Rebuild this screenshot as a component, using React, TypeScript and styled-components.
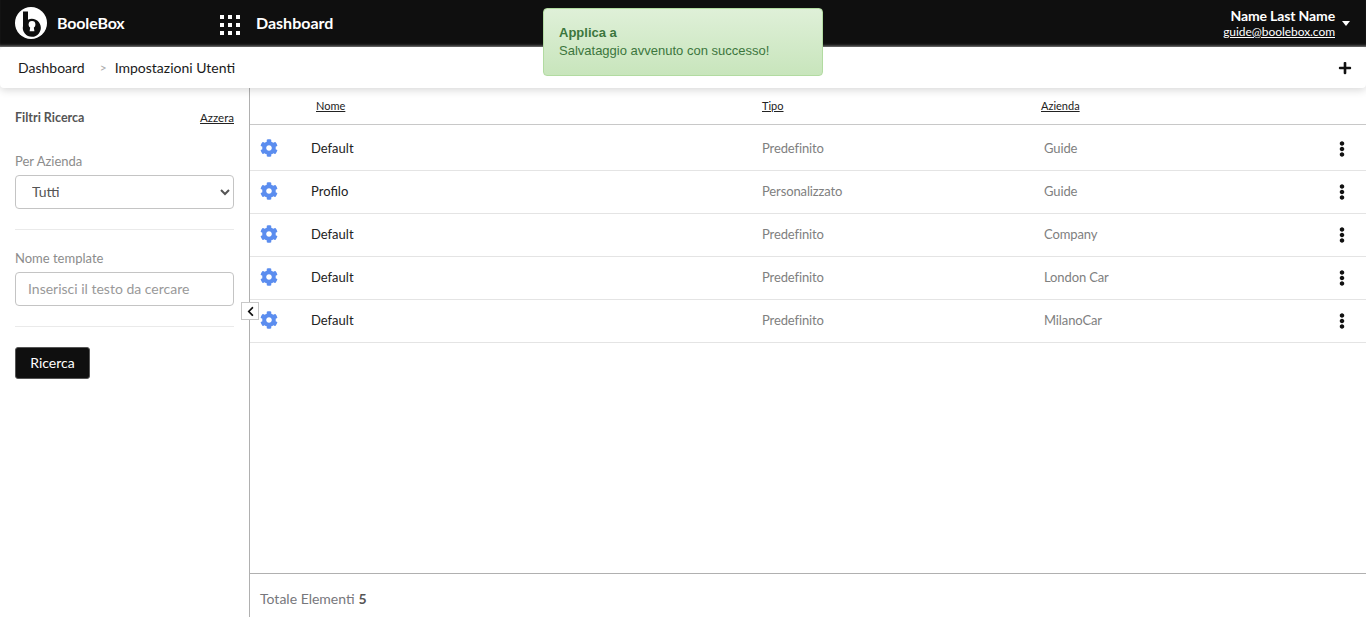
import React from 'react';
import styled, { createGlobalStyle } from 'styled-components';
import { FaCog, FaEllipsisV, FaChevronLeft, FaPlus } from 'react-icons/fa';

const GlobalStyle = createGlobalStyle`
  html, body {
    margin: 0;
    padding: 0;
    height: 100%;
    background: #fff;
    font-family: Lato, "Open Sans", sans-serif;
    overflow: hidden;
  }
  #root {
    height: 100%;
  }
  * {
    box-sizing: border-box;
  }
`;

const Page = styled.div`
  display: flex;
  flex-direction: column;
  height: 617px;
  position: relative;
`;

const Header = styled.header`
  display: flex;
  align-items: center;
  height: 47px;
  flex: none;
  background: #0f0f0f;
  color: #fff;
  padding: 0 15px 1px;
  box-shadow: inset 0 -3px 3px -2px #8a8a8a;
  position: relative;
  z-index: 3;
`;

const Brand = styled.div`
  display: flex;
  align-items: center;
  gap: 10px;
  width: 205px;
  font-size: 16px;
  font-weight: 700;
  letter-spacing: -0.15px;
`;

const BrandName = styled.span`
  margin-top: -1px;
`;

const Apps = styled.div`
  display: grid;
  grid-template-columns: repeat(3, 4px);
  grid-auto-rows: 4px;
  gap: 4px;
  margin-right: 16px;
  margin-top: 3px;
`;

const AppsDot = styled.span`
  background: #fff;
`;

const PageTitle = styled.div`
  font-size: 16px;
  font-weight: 700;
  margin-top: -1px;
`;

const UserBlock = styled.div`
  margin-left: auto;
  display: flex;
  align-items: center;
  gap: 7px;
  padding-right: 1px;
  margin-top: -1px;
`;

const UserText = styled.div`
  display: flex;
  flex-direction: column;
  align-items: flex-end;
`;

const UserName = styled.div`
  font-size: 14px;
  font-weight: 700;
  line-height: 16px;
  letter-spacing: -0.13px;
  margin-bottom: 1px;
`;

const UserMail = styled.a`
  font-size: 12px;
  line-height: 13px;
  letter-spacing: -0.05px;
  color: #fff;
  text-decoration: underline;
`;

const Caret = styled.span`
  width: 0;
  height: 0;
  border-left: 4.5px solid transparent;
  border-right: 4.5px solid transparent;
  border-top: 5px solid #fff;
  margin-top: 2px;
`;

const Crumbs = styled.nav`
  display: flex;
  align-items: center;
  height: 41px;
  flex: none;
  background: #fff;
  padding: 0 14px 0 18px;
  font-size: 14px;
  box-shadow: 0 2px 8px rgba(0, 0, 0, 0.16);
  border-radius: 4px;
  position: relative;
  z-index: 2;
`;

const Crumb = styled.span`
  color: #1a1a1a;
`;

const CrumbSep = styled.span`
  color: #aaa;
  font-size: 12px;
  margin: 0 8px 0 15px;
`;

const AddButton = styled.span`
  margin-left: auto;
  display: flex;
  color: #111;
  font-size: 14px;
`;

const Body = styled.div`
  display: flex;
  flex: 1;
  min-height: 0;
`;

const Sidebar = styled.aside`
  width: 250px;
  flex: none;
  border-right: 1px solid #b0b0b0;
  padding: 19px 15px 0;
  position: relative;
`;

const FilterHead = styled.div`
  display: flex;
  justify-content: space-between;
  align-items: center;
  height: 20px;
  margin-bottom: 26px;
`;

const FilterTitle = styled.div`
  font-size: 12.5px;
  font-weight: 700;
  color: #555;
`;

const ResetLink = styled.a`
  font-size: 11.5px;
  color: #222;
  text-decoration: underline;
`;

const FieldLabel = styled.label`
  display: block;
  font-size: 13px;
  line-height: 17px;
  color: #8c8c8c;
  margin-bottom: 5px;
`;

const Select = styled.select`
  display: block;
  width: 100%;
  height: 34px;
  border: 1px solid #c4c4c4;
  border-radius: 4px;
  background: #fff;
  color: #555;
  font-family: inherit;
  font-size: 14px;
  padding: 0 8px 2px 12px;
`;

const TextInput = styled.input`
  display: block;
  width: 100%;
  height: 34px;
  border: 1px solid #c4c4c4;
  border-radius: 4px;
  background: #fff;
  font-family: inherit;
  font-size: 14px;
  padding: 0 12px 2px;

  &::placeholder {
    color: #999;
    opacity: 1;
  }
`;

const Divider = styled.hr`
  border: none;
  border-top: 1px solid #eaeaea;
  margin: 20px 0 20px;
`;

const SearchButton = styled.button`
  height: 32px;
  width: 75px;
  background: #0f0f0f;
  color: #fff;
  border: 1px solid #555;
  border-radius: 3px;
  font-family: inherit;
  font-size: 14px;
  padding: 0 0 1px;
`;

const Collapse = styled.button`
  position: absolute;
  right: -10px;
  top: 214px;
  width: 18px;
  height: 18px;
  padding: 0;
  display: flex;
  align-items: center;
  justify-content: center;
  background: #fff;
  border: 1px solid #c8c8c8;
  color: #111;
  font-size: 11px;
  z-index: 1;
`;

const Main = styled.main`
  flex: 1;
  display: flex;
  flex-direction: column;
  min-width: 0;
`;

const Rows = styled.div`
  flex: 1;
`;

const HeadRow = styled.div`
  display: grid;
  grid-template-columns: 512px 279px 1fr;
  align-items: center;
  height: 37px;
  padding-bottom: 2px;
  border-bottom: 1px solid #c8c8c8;
  font-size: 11px;
  color: #222;
`;

const HeadCell = styled.a<{ $pad?: number }>`
  padding-left: ${({ $pad }) => $pad ?? 0}px;
  text-decoration: underline;
`;

const Row = styled.div<{ $first?: boolean }>`
  display: grid;
  grid-template-columns: 61px 451px 282px 1fr 48px;
  align-items: center;
  height: ${({ $first }) => ($first ? 46 : 43)}px;
  padding-bottom: ${({ $first }) => ($first ? 0 : 2)}px;
  border-bottom: 1px solid #e4e4e4;
  font-size: 13px;
`;

const GearCell = styled.span`
  display: flex;
  padding-left: 10px;
  color: #5b8def;
  font-size: 18px;
`;

const NameCell = styled.span`
  color: #222;
`;

const GreyCell = styled.span`
  color: #808080;
  letter-spacing: -0.12px;
`;

const MenuCell = styled.span`
  display: flex;
  justify-content: center;
  color: #111;
  font-size: 16px;
  padding-top: 2px;
`;

const Footer = styled.footer`
  flex: none;
  height: 44px;
  border-top: 1px solid #b0b0b0;
  display: flex;
  align-items: center;
  padding: 5px 0 0 10px;
  font-size: 14px;
  color: #77777c;
`;

const FooterCount = styled.strong`
  color: #555;
  margin-left: 4px;
`;

const Toast = styled.div`
  position: absolute;
  left: 543px;
  top: 8px;
  width: 280px;
  height: 68px;
  padding: 15px;
  border: 1px solid #b2dba1;
  border-radius: 4px;
  background: linear-gradient(to bottom, #dff0d8 0, #c8e5bc 100%);
  color: #3c763d;
  font-family: "Liberation Sans", Arial, sans-serif;
  font-size: 13px;
  line-height: 18px;
  z-index: 5;
`;

const ToastTitle = styled.div`
  font-weight: 700;
`;

const Logo = () => (
  <svg width="32" height="34" viewBox="0 0 32 34" aria-hidden="true">
    <circle cx="16" cy="17" r="16" fill="#fff" />
    <path d="M8 5.5h5v8.2a9 9 0 1 1-5 6.3z" fill="#0f0f0f" />
    <circle cx="17" cy="18.5" r="3.4" fill="#fff" />
    <path d="M15.6 19h2.8l1 6.2h-4.8z" fill="#fff" />
  </svg>
);

const rows = [
  { name: 'Default', type: 'Predefinito', company: 'Guide' },
  { name: 'Profilo', type: 'Personalizzato', company: 'Guide' },
  { name: 'Default', type: 'Predefinito', company: 'Company' },
  { name: 'Default', type: 'Predefinito', company: 'London Car' },
  { name: 'Default', type: 'Predefinito', company: 'MilanoCar' },
];

const App: React.FC = () => {
  return (
    <Page>
      <GlobalStyle />
      <Header>
        <Brand>
          <Logo />
          <BrandName>BooleBox</BrandName>
        </Brand>
        <Apps>
          {Array.from({ length: 9 }, (_, i) => (
            <AppsDot key={i} />
          ))}
        </Apps>
        <PageTitle>Dashboard</PageTitle>
        <UserBlock>
          <UserText>
            <UserName>Name Last Name</UserName>
            <UserMail>guide@boolebox.com</UserMail>
          </UserText>
          <Caret />
        </UserBlock>
      </Header>
      <Crumbs>
        <Crumb>Dashboard</Crumb>
        <CrumbSep>&gt;</CrumbSep>
        <Crumb>Impostazioni Utenti</Crumb>
        <AddButton>
          <FaPlus />
        </AddButton>
      </Crumbs>
      <Body>
        <Sidebar>
          <FilterHead>
            <FilterTitle>Filtri Ricerca</FilterTitle>
            <ResetLink>Azzera</ResetLink>
          </FilterHead>
          <FieldLabel>Per Azienda</FieldLabel>
          <Select defaultValue="Tutti">
            <option>Tutti</option>
          </Select>
          <Divider />
          <FieldLabel>Nome template</FieldLabel>
          <TextInput placeholder="Inserisci il testo da cercare" />
          <Divider />
          <SearchButton>Ricerca</SearchButton>
          <Collapse>
            <FaChevronLeft />
          </Collapse>
        </Sidebar>
        <Main>
          <Rows>
            <HeadRow>
              <HeadCell $pad={66}>Nome</HeadCell>
              <HeadCell>Tipo</HeadCell>
              <HeadCell>Azienda</HeadCell>
            </HeadRow>
            {rows.map((row, i) => (
              <Row key={i} $first={i === 0}>
                <GearCell>
                  <FaCog />
                </GearCell>
                <NameCell>{row.name}</NameCell>
                <GreyCell>{row.type}</GreyCell>
                <GreyCell>{row.company}</GreyCell>
                <MenuCell>
                  <FaEllipsisV />
                </MenuCell>
              </Row>
            ))}
          </Rows>
          <Footer>
            Totale Elementi<FooterCount>5</FooterCount>
          </Footer>
        </Main>
      </Body>
      <Toast>
        <ToastTitle>Applica a</ToastTitle>
        Salvataggio avvenuto con successo!
      </Toast>
    </Page>
  );
};

export default App;
